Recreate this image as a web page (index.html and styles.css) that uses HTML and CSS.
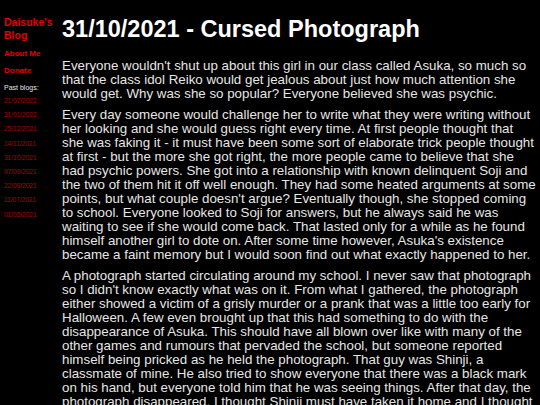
FILE: index.html
```html
<!DOCTYPE html>
<html>
<head>
<meta charset="utf-8">
<link rel="stylesheet" href="styles.css">
</head>
<body>
<div class="page">
  <nav class="sidebar">
    <a class="brand" href="#">Daisuke's Blog</a>
    <a class="navlink" href="#">About Me</a>
    <a class="navlink" href="#">Donate</a>
    <div class="past">Past blogs:</div>
    <ul class="dates">
      <li><a href="#">21/07/2022</a></li>
      <li><a href="#">31/01/2022</a></li>
      <li><a href="#">25/12/2021</a></li>
      <li><a href="#">14/11/2021</a></li>
      <li><a href="#">31/10/2021</a></li>
      <li><a href="#">07/09/2021</a></li>
      <li><a href="#">22/08/2021</a></li>
      <li><a href="#">11/07/2021</a></li>
      <li><a href="#">01/05/2021</a></li>
    </ul>
  </nav>
  <main class="content">
    <h1 class="title">31/10/2021 - Cursed Photograph</h1>
    <p>Everyone wouldn't shut up about this girl in our class called Asuka, so much so that the class idol Reiko would get jealous about just how much attention she would get. Why was she so popular? Everyone believed she was psychic.</p>
    <p>Every day someone would challenge her to write what they were writing without her looking and she would guess right every time. At first people thought that she was faking it - it must have been some sort of elaborate trick people thought at first - but the more she got right, the more people came to believe that she had psychic powers. She got into a relationship with known delinquent Soji and the two of them hit it off well enough. They had some heated arguments at some points, but what couple doesn't argue? Eventually though, she stopped coming to school. Everyone looked to Soji for answers, but he always said he was waiting to see if she would come back. That lasted only for a while as he found himself another girl to dote on. After some time however, Asuka's existence became a faint memory but I would soon find out what exactly happened to her.</p>
    <p>A photograph started circulating around my school. I never saw that photograph so I didn't know exactly what was on it. From what I gathered, the photograph either showed a victim of a grisly murder or a prank that was a little too early for Halloween. A few even brought up that this had something to do with the disappearance of Asuka. This should have all blown over like with many of the other games and rumours that pervaded the school, but someone reported himself being pricked as he held the photograph. That guy was Shinji, a classmate of mine. He also tried to show everyone that there was a black mark on his hand, but everyone told him that he was seeing things. After that day, the photograph disappeared. I thought Shinji must have taken it home and I thought nothing more of it until the next week.</p>
  </main>
</div>
</body>
</html>
```
FILE: styles.css
```css
html, body {
  margin: 0;
  padding: 0;
  background: #000;
}
body {
  font-family: "Liberation Sans", Arial, sans-serif;
  color: #e6e6e6;
}
.page {
  display: flex;
  align-items: flex-start;
}
.sidebar {
  width: 54px;
  flex: none;
  padding: 16px 0 0 4px;
  display: flex;
  flex-direction: column;
}
.sidebar a {
  text-decoration: none;
}
.brand {
  color: #e00000;
  font-weight: bold;
  font-size: 10.5px;
  line-height: 13px;
}
.navlink {
  color: #e00000;
  font-weight: bold;
  font-size: 8px;
  margin-top: 7px;
  line-height: 10px;
}
.past {
  color: #e6e6e6;
  font-size: 7px;
  margin-top: 7px;
  line-height: 9px;
}
.dates {
  list-style: none;
  margin: 2px 0 0;
  padding: 0;
}
.dates li {
  font-size: 6.5px;
  line-height: 14.2px;
}
.dates a {
  color: #b00000;
}
.content {
  flex: 1;
  padding: 0 4px 0 4px;
}
.title {
  color: #fff;
  font-size: 23.5px;
  font-weight: bold;
  margin: 15px 0 0;
  line-height: 28px;
}
.content p {
  font-size: 13.33px;
  line-height: 14px;
  margin: 16px 0 0;
}
.content p + p {
  margin-top: 7px;
}
```
